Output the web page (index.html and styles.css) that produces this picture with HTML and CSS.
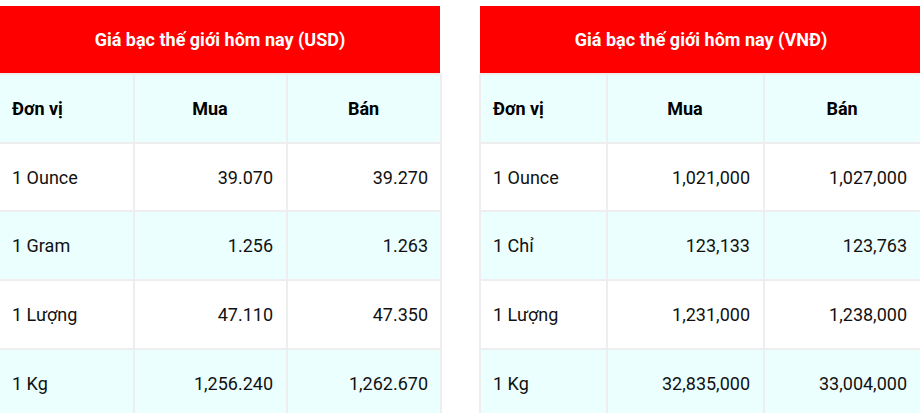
FILE: index.html
```html
<!DOCTYPE html>
<html lang="vi">
<head>
<meta charset="utf-8">
<title>Giá bạc thế giới hôm nay</title>
<link rel="stylesheet" href="styles.css">
</head>
<body>
<div class="tables">
  <table class="price price-usd">
    <colgroup>
      <col class="c1"><col class="c2"><col class="c3">
    </colgroup>
    <thead>
      <tr><th class="title" colspan="3">Giá bạc thế giới hôm nay (USD)</th></tr>
      <tr class="head"><th class="unit">Đơn vị</th><th>Mua</th><th>Bán</th></tr>
    </thead>
    <tbody>
      <tr><td class="unit">1 Ounce</td><td class="num">39.070</td><td class="num">39.270</td></tr>
      <tr class="alt"><td class="unit">1 Gram</td><td class="num">1.256</td><td class="num">1.263</td></tr>
      <tr><td class="unit">1 Lượng</td><td class="num">47.110</td><td class="num">47.350</td></tr>
      <tr class="alt"><td class="unit">1 Kg</td><td class="num">1,256.240</td><td class="num">1,262.670</td></tr>
    </tbody>
  </table>
  <table class="price price-vnd">
    <colgroup>
      <col class="c1"><col class="c2"><col class="c3">
    </colgroup>
    <thead>
      <tr><th class="title" colspan="3">Giá bạc thế giới hôm nay (VNĐ)</th></tr>
      <tr class="head"><th class="unit">Đơn vị</th><th>Mua</th><th>Bán</th></tr>
    </thead>
    <tbody>
      <tr><td class="unit">1 Ounce</td><td class="num">1,021,000</td><td class="num">1,027,000</td></tr>
      <tr class="alt"><td class="unit">1 Chỉ</td><td class="num">123,133</td><td class="num">123,763</td></tr>
      <tr><td class="unit">1 Lượng</td><td class="num">1,231,000</td><td class="num">1,238,000</td></tr>
      <tr class="alt"><td class="unit">1 Kg</td><td class="num">32,835,000</td><td class="num">33,004,000</td></tr>
    </tbody>
  </table>
</div>
</body>
</html>
```
FILE: styles.css
```css
html, body {
  margin: 0;
  padding: 0;
  background: #fff;
}
body {
  font-family: Roboto, "Noto Sans", Arial, sans-serif;
  font-size: 18px;
  color: #111;
  overflow: hidden;
}
.tables {
  display: flex;
  align-items: flex-start;
  gap: 37px;
  padding-top: 6px;
}
.price {
  border-collapse: separate;
  border-spacing: 0;
  table-layout: fixed;
  flex: none;
}
.price-usd { width: 442px; }
.price-vnd { width: 443px; }
.price-usd .c1 { width: 135px; }
.price-usd .c2 { width: 153px; }
.price-usd .c3 { width: 154px; }
.price-vnd .c1 { width: 129px; }
.price-vnd .c2 { width: 157px; }
.price-vnd .c3 { width: 157px; }

.price th, .price td {
  height: 66.7px;
  padding: 0 13px 0 12px;
  border-right: 2px solid #eee;
  border-bottom: 2px solid #eee;
  box-sizing: content-box;
  vertical-align: middle;
  white-space: nowrap;
}
.price-usd td.num { padding-right: 13px; }
.price-usd td.num + td.num { padding-right: 12px; }
.price-vnd .unit {
  border-left: 2px solid #eee;
  padding-left: 12px;
}
.price th.title {
  height: 67px;
  background: #ff0000;
  background-clip: padding-box;
  color: #fff;
  font-weight: 700;
  text-align: center;
  border-right: 2px solid transparent;
  padding: 0 12px;
}
.price-vnd th.title {
  border-right: 0;
  border-left: 1px solid transparent;
}
.price tr.head th {
  background: #ebffff;
  font-weight: 700;
  text-align: center;
  color: #000;
}
.price tr.head th.unit { text-align: left; }
.price tr.alt td { background: #ebffff; }
.price td.unit { text-align: left; }
.price td.num { text-align: right; }
```
